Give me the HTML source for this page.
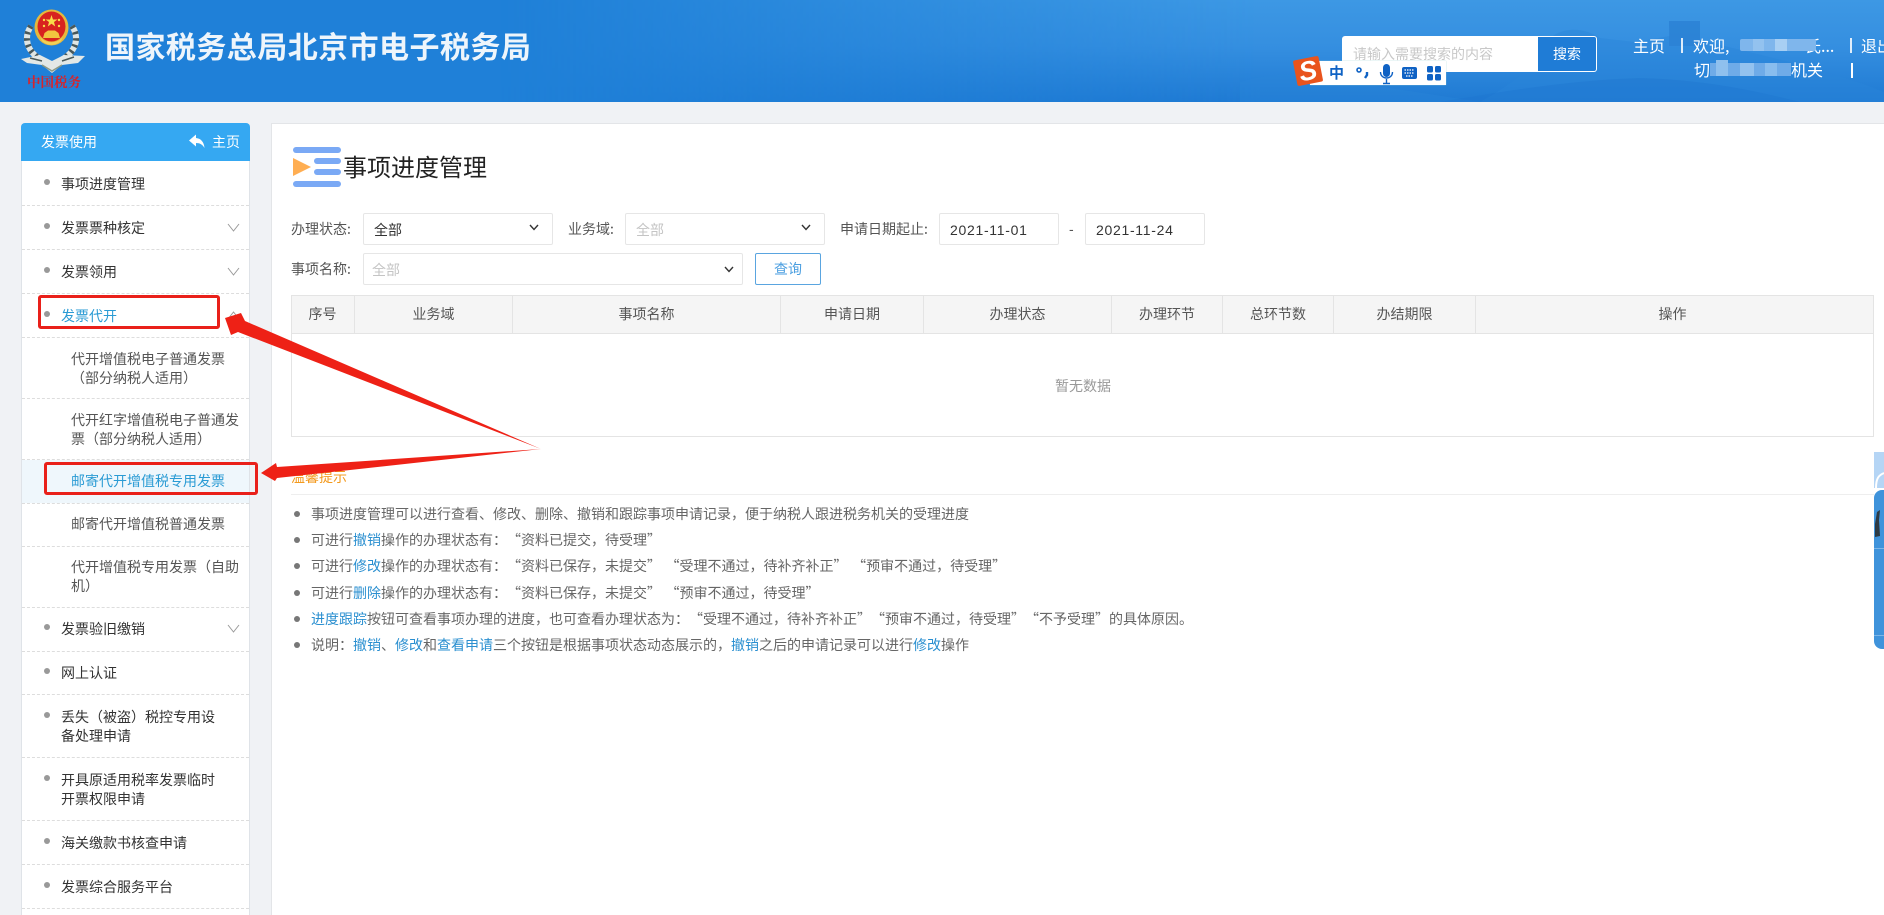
<!DOCTYPE html>
<html lang="zh-CN">
<head>
<meta charset="utf-8">
<title>事项进度管理</title>
<style>
html,body{margin:0;padding:0;width:1884px;height:915px;overflow:hidden;background:#f0f2f5}
body{position:relative;font-family:"Noto Sans CJK SC","Liberation Sans",sans-serif;font-size:14px;color:#333;text-spacing-trim:space-all}
.a,.t,.l,.s,.h,.p{position:absolute}
.t{white-space:nowrap;line-height:20px;height:20px}
.l{left:61px;white-space:nowrap;line-height:19px;color:#333}
.s{left:71px;white-space:nowrap;line-height:19px;color:#555}
.d{position:absolute;left:22px;width:227px;height:0;border-top:1px dashed #ddd}
.b{position:absolute;left:44px;width:6px;height:6px;border-radius:50%;background:#999}
.box{position:absolute;background:#fff;border:1px solid #e6e6e6;box-sizing:border-box;border-radius:2px}
.h{top:295px;height:39px;line-height:39px;text-align:center;color:#555;box-sizing:border-box;border-right:1px solid #e4e4e4}
.p{left:311px;white-space:pre;line-height:20px;color:#666;word-spacing:1.4px}
.p a{color:#2a8fd0;text-decoration:none}
.p:before{content:"";position:absolute;left:-17px;top:7px;width:6px;height:6px;border-radius:50%;background:#777}
.w{color:#fff;font-size:16px}
.m{position:absolute;background:#8fc0ee}
.dt{font-family:'Liberation Sans',sans-serif;color:#333;letter-spacing:.7px}
</style>
</head>
<body>

<!-- header -->
<div class="a" style="left:0;top:0;width:1884px;height:102px;background:#1f80d8;overflow:hidden">
  <div class="a" style="left:500px;top:0;width:1384px;height:102px;background:linear-gradient(180deg,#3d98e4 0,#358fe0 45%,#1f7ad3 100%);-webkit-mask-image:linear-gradient(90deg,transparent 0,#000 55%);mask-image:linear-gradient(90deg,transparent 0,#000 55%)"></div>
  <svg class="a" style="left:1240px;top:0" width="644" height="102" viewBox="0 0 644 102">
    <path d="M0 82 C40 70 90 72 130 85 L240 102 L0 102Z" fill="#2a86da" opacity=".35"/>
    <path d="M310 38 C325 26 345 28 360 38 L395 42 L430 36 L429 21 L460 21 L460 40 C520 55 590 70 644 92 L644 102 L240 102 C280 80 300 60 310 38Z" fill="#2b85da" opacity=".45"/>
    <path d="M429 21 L460 21 L460 46 L429 46Z" fill="#2a7fd2" opacity=".6"/>
    <path d="M200 102 C260 92 330 80 400 78 C470 80 520 92 560 102Z" fill="#1d75cf" opacity=".4"/>
  </svg>
</div>

<!-- emblem -->
<svg class="a" style="left:0;top:0" width="100" height="76" viewBox="0 0 100 76">
  <path d="M31 26 C23 38 27 52 42 60" fill="none" stroke="#dfe5e3" stroke-width="6"/>
  <path d="M72 26 C80 38 76 52 61 60" fill="none" stroke="#dfe5e3" stroke-width="6"/>
  <path d="M31 26 C23 38 27 52 42 60" fill="none" stroke="#48585a" stroke-width="6" stroke-dasharray="2.5 4"/>
  <path d="M72 26 C80 38 76 52 61 60" fill="none" stroke="#48585a" stroke-width="6" stroke-dasharray="2.5 4"/>
  <path d="M21 59 L40 55 L52 61 L64 55 L85 56 L78 63 L62 65 L52 73 L42 65 L27 63Z" fill="#e3e8e6"/>
  <path d="M42 65 L52 71 L62 65" fill="none" stroke="#8c9a86" stroke-width="1.5"/>
  <path d="M30 58 L42 61 M74 57 L62 61" stroke="#4a5a5a" stroke-width="1.5"/>
  <ellipse cx="51.5" cy="27.5" rx="17" ry="18" fill="#e6b83c"/>
  <ellipse cx="51.5" cy="26.5" rx="14" ry="15" fill="#d8231f"/>
  <polygon points="51.5,15 53,19.5 57.5,19.5 54,22 55.2,26.5 51.5,23.8 47.8,26.5 49,22 45.5,19.5 50,19.5" fill="#f8dc4a"/>
  <circle cx="44" cy="20" r="1.2" fill="#f8dc4a"/><circle cx="59" cy="20" r="1.2" fill="#f8dc4a"/><circle cx="44" cy="26" r="1.2" fill="#f8dc4a"/><circle cx="59" cy="26" r="1.2" fill="#f8dc4a"/>
  <path d="M43 38 L44.5 33 L48 30.5 L55 30.5 L58.5 33 L60 38Z" fill="#f2c63f"/>
  <path d="M40 37 C46 44 57 44 63 37 L61 41 C56 46 47 46 42 41Z" fill="#f3d058"/>
</svg>
<div class="t" style="left:27px;top:71px;width:56px;font-family:'Noto Serif CJK SC','Liberation Serif',serif;font-size:13.5px;color:#d8232a;font-weight:700;height:20px">中国税务</div>

<div class="t" style="left:105px;top:25px;height:40px;line-height:40px;font-size:30px;font-weight:700;color:#eef5fb;letter-spacing:.45px">国家税务总局北京市电子税务局</div>

<!-- search -->
<div class="a" style="left:1342px;top:36px;width:196px;height:36px;background:#fff;border-radius:3px 0 0 3px"></div>
<div class="t" style="left:1353px;top:44px;color:#c8c8c8">请输入需要搜索的内容</div>
<div class="a" style="left:1538px;top:36px;width:59px;height:36px;box-sizing:border-box;background:#1f7cd6;border:1px solid #fff;border-left:0;border-radius:0 3px 3px 0;color:#fff;text-align:center;line-height:34px">搜索</div>

<!-- sogou bar -->
<div class="a" style="left:1310px;top:61px;width:136px;height:24px;background:#fff;box-shadow:0 0 1px #9cc"></div>
<div class="a" style="left:1295px;top:58px;width:26px;height:26px;background:#e9541d;border-radius:2px;transform:rotate(-11deg);color:#fff;font:italic 700 27px/26px 'Liberation Sans',sans-serif;text-align:center">S</div>
<div class="t" style="left:1329px;top:63px;font-size:15px;font-weight:700;color:#0f62c4">中</div>
<svg class="a" style="left:1354px;top:62px" width="92" height="24" viewBox="0 0 92 24">
  <circle cx="5" cy="8" r="2" fill="none" stroke="#0f62c4" stroke-width="1.6"/>
  <path d="M13 10 L13 13 L11 16" fill="none" stroke="#0f62c4" stroke-width="2.4"/>
  <rect x="29" y="2" width="7" height="13" rx="3.5" fill="#0f62c4"/>
  <path d="M26.5 10 C26.5 18 38.5 18 38.5 10 M32.5 17 L32.5 21 M29 21.5 L36 21.5" fill="none" stroke="#0f62c4" stroke-width="1.4"/>
  <rect x="48" y="5" width="15" height="12" rx="2" fill="#0f62c4"/>
  <path d="M50.5 8 H60.5 M50.5 11 H60.5 M52 14 H59" stroke="#fff" stroke-width="1.3" stroke-dasharray="1.5 1"/>
  <rect x="73" y="4" width="6" height="6.5" rx="1.6" fill="#0f62c4"/><rect x="81" y="4" width="6" height="6.5" rx="1.6" fill="#0f62c4"/><rect x="73" y="12" width="6" height="6.5" rx="1.6" fill="#0f62c4"/><rect x="81" y="12" width="6" height="6.5" rx="1.6" fill="#0f62c4"/>
</svg>

<!-- user -->
<div class="t w" style="left:1633px;top:35px">主页</div>
<div class="a" style="left:1681px;top:38px;width:2px;height:15px;background:#fff;opacity:.85"></div>
<div class="t w" style="left:1693px;top:35px">欢迎,</div>
<div class="t w" style="left:1805px;top:35px;width:30px;overflow:hidden">氏...</div>
<div class="m" style="left:1740px;top:39px;width:76px;height:12px;background:#7fb6ec;border-radius:2px"></div>
<div class="m" style="left:1775px;top:39px;width:12px;height:12px;background:#a8cff3"></div>
<div class="m" style="left:1753px;top:39px;width:11px;height:12px;background:#93c2ef"></div>
<div class="a" style="left:1850px;top:38px;width:2px;height:15px;background:#fff;opacity:.85"></div>
<div class="t w" style="left:1861px;top:35px">退出</div>
<div class="t w" style="left:1694px;top:59px">切</div>
<div class="m" style="left:1710px;top:63px;width:81px;height:13px;background:#6fabe8"></div>
<div class="m" style="left:1716px;top:60px;width:12px;height:16px;background:#8fc0ee"></div>
<div class="m" style="left:1740px;top:63px;width:14px;height:13px;background:#93c2ef"></div>
<div class="m" style="left:1765px;top:63px;width:12px;height:13px;background:#89bdee"></div>
<div class="t w" style="left:1791px;top:59px">机关</div>
<div class="a" style="left:1851px;top:63px;width:2px;height:15px;background:#fff"></div>

<!-- sidebar -->
<div class="a" style="left:21px;top:161px;width:229px;height:754px;background:#fff;border:1px solid #dfe3e8;border-width:0 1px;box-sizing:border-box"></div>
<div class="a" style="left:21px;top:123px;width:229px;height:38px;background:#35a8f2;border-radius:4px 4px 0 0"></div>
<div class="t" style="left:41px;top:132px;color:#fff">发票使用</div>
<svg class="a" style="left:189px;top:134px" width="16" height="15" viewBox="0 0 16 15"><path d="M0 6.5 L7 .5 L7 4 C12 4.5 15 8 15.5 14 C13.5 10.5 11 9 7 9 L7 12.5Z" fill="#fff"/></svg>
<div class="t" style="left:212px;top:132px;color:#fff">主页</div>

<div class="a" style="left:22px;top:460px;width:227px;height:43px;background:#eff7fc"></div>
<div class="d" style="top:205px"></div><div class="d" style="top:249px"></div><div class="d" style="top:293px"></div><div class="d" style="top:337px"></div><div class="d" style="top:398px"></div><div class="d" style="top:459px"></div><div class="d" style="top:503px"></div><div class="d" style="top:546px"></div><div class="d" style="top:607px"></div><div class="d" style="top:651px"></div><div class="d" style="top:694px"></div><div class="d" style="top:757px"></div><div class="d" style="top:820px"></div><div class="d" style="top:864px"></div><div class="d" style="top:908px"></div>

<div class="b" style="top:179px"></div><div class="l" style="top:175px">事项进度管理</div>
<div class="b" style="top:223px"></div><div class="l" style="top:219px">发票票种核定</div>
<div class="b" style="top:267px"></div><div class="l" style="top:263px">发票领用</div>
<div class="b" style="top:311px"></div><div class="l" style="top:307px;color:#2a9bd4">发票代开</div>
<div class="s" style="top:350px">代开增值税电子普通发票<br>（部分纳税人适用）</div>
<div class="s" style="top:411px">代开红字增值税电子普通发<br>票（部分纳税人适用）</div>
<div class="s" style="top:472px;color:#2a9bd4">邮寄代开增值税专用发票</div>
<div class="s" style="top:515px">邮寄代开增值税普通发票</div>
<div class="s" style="top:558px">代开增值税专用发票（自助<br>机）</div>
<div class="b" style="top:624px"></div><div class="l" style="top:620px">发票验旧缴销</div>
<div class="b" style="top:668px"></div><div class="l" style="top:664px">网上认证</div>
<div class="b" style="top:712px"></div><div class="l" style="top:708px">丢失（被盗）税控专用设<br>备处理申请</div>
<div class="b" style="top:775px"></div><div class="l" style="top:771px">开具原适用税率发票临时<br>开票权限申请</div>
<div class="b" style="top:838px"></div><div class="l" style="top:834px">海关缴款书核查申请</div>
<div class="b" style="top:882px"></div><div class="l" style="top:878px">发票综合服务平台</div>

<svg class="a" style="left:0;top:0" width="260" height="700" viewBox="0 0 260 700">
  <g fill="none" stroke="#9a9a9a" stroke-width="1">
    <path d="M228 224 L233.5 231 L239 224"/>
    <path d="M228 268 L233.5 275 L239 268"/>
    <path d="M228 319 L233.5 312 L239 319"/>
    <path d="M228 625 L233.5 632 L239 625"/>
  </g>
</svg>

<!-- main panel -->
<div class="a" style="left:271px;top:123px;width:1613px;height:792px;background:#fff;border:1px solid #e3e5e8;border-width:1px 0 0 1px;box-sizing:border-box"></div>

<svg class="a" style="left:293px;top:147px" width="48" height="40" viewBox="0 0 48 40">
  <rect x="0" y="0" width="48" height="6" rx="3" fill="#7aa9f5"/>
  <rect x="21" y="11" width="27" height="6" rx="3" fill="#7aa9f5"/>
  <rect x="21" y="22" width="27" height="6" rx="3" fill="#7aa9f5"/>
  <rect x="0" y="34" width="48" height="6" rx="3" fill="#7aa9f5"/>
  <polygon points="0,11 18,20 0,29" fill="#ffae52"/>
</svg>
<div class="t" style="left:343px;top:151px;height:30px;line-height:30px;font-size:24px;color:#222">事项进度管理</div>

<!-- filters -->
<div class="t" style="left:291px;top:219px;color:#555">办理状态:</div>
<div class="box" style="left:363px;top:213px;width:190px;height:32px"></div>
<div class="t" style="left:374px;top:220px;color:#333">全部</div>
<div class="t" style="left:568px;top:219px;color:#555">业务域:</div>
<div class="box" style="left:625px;top:213px;width:200px;height:32px"></div>
<div class="t" style="left:636px;top:220px;color:#c4c4c4">全部</div>
<div class="t" style="left:840px;top:219px;color:#555">申请日期起止:</div>
<div class="box" style="left:939px;top:213px;width:120px;height:32px"></div>
<div class="t dt" style="left:950px;top:220px">2021-11-01</div>
<div class="t" style="left:1069px;top:219px;font-family:'Liberation Sans',sans-serif;color:#555">-</div>
<div class="box" style="left:1085px;top:213px;width:120px;height:32px"></div>
<div class="t dt" style="left:1096px;top:220px">2021-11-24</div>

<div class="t" style="left:291px;top:259px;color:#555">事项名称:</div>
<div class="box" style="left:363px;top:253px;width:380px;height:32px"></div>
<div class="t" style="left:372px;top:260px;color:#c4c4c4">全部</div>
<div class="a" style="left:755px;top:253px;width:66px;height:32px;box-sizing:border-box;border:1px solid #5aa5e0;border-radius:2px;color:#4a9ee0;text-align:center;line-height:31px;background:#fff">查询</div>

<svg class="a" style="left:0;top:0" width="830" height="290" viewBox="0 0 830 290">
  <g fill="none" stroke="#333" stroke-width="1.4">
    <path d="M530 225 L534 229.5 L538 225"/>
    <path d="M802 225 L806 229.5 L810 225"/>
    <path d="M725 267 L729 271.5 L733 267"/>
  </g>
</svg>

<!-- table -->
<div class="a" style="left:291px;top:295px;width:1583px;height:142px;box-sizing:border-box;border:1px solid #e4e4e4"></div>
<div class="a" style="left:291px;top:295px;width:1583px;height:39px;background:#f5f5f5;box-sizing:border-box;border:1px solid #e4e4e4"></div>
<div class="h" style="left:291px;width:64px">序号</div>
<div class="h" style="left:355px;width:158px">业务域</div>
<div class="h" style="left:513px;width:268px">事项名称</div>
<div class="h" style="left:781px;width:143px">申请日期</div>
<div class="h" style="left:924px;width:188px">办理状态</div>
<div class="h" style="left:1112px;width:111px">办理环节</div>
<div class="h" style="left:1223px;width:111px">总环节数</div>
<div class="h" style="left:1334px;width:142px">办结期限</div>
<div class="h" style="left:1476px;width:393px;border-right:0">操作</div>
<div class="t" style="left:1055px;top:376px;color:#999">暂无数据</div>

<!-- tips -->
<div class="t" style="left:291px;top:467px;color:#f39a1f">温馨提示</div>
<div class="a" style="left:291px;top:494px;width:1583px;height:1px;background:#eee"></div>
<div class="p" style="top:504px">事项进度管理可以进行查看、修改、删除、撤销和跟踪事项申请记录，便于纳税人跟进税务机关的受理进度</div>
<div class="p" style="top:530px">可进行<a>撤销</a>操作的办理状态有：“资料已提交，待受理”</div>
<div class="p" style="top:556px">可进行<a>修改</a>操作的办理状态有：“资料已保存，未提交” “受理不通过，待补齐补正” “预审不通过，待受理”</div>
<div class="p" style="top:583px">可进行<a>删除</a>操作的办理状态有：“资料已保存，未提交” “预审不通过，待受理”</div>
<div class="p" style="top:609px"><a>进度跟踪</a>按钮可查看事项办理的进度，也可查看办理状态为：“受理不通过，待补齐补正”“预审不通过，待受理”“不予受理”的具体原因。</div>
<div class="p" style="top:635px">说明：<a>撤销</a>、<a>修改</a>和<a>查看申请</a>三个按钮是根据事项状态动态展示的，<a>撤销</a>之后的申请记录可以进行<a>修改</a>操作</div>

<!-- right floating widget -->
<div class="a" style="left:1874px;top:452px;width:10px;height:36px;background:#b5d5f5;overflow:hidden">
  <svg width="10" height="36" viewBox="0 0 10 36" style="display:block"><path d="M2 36 C2 26 5 23 10 21" fill="none" stroke="#fff" stroke-width="2"/></svg>
</div>
<div class="a" style="left:1874px;top:490px;width:10px;height:159px;background:#3f93db;border-radius:8px 0 0 8px;overflow:hidden">
  <div class="a" style="left:0;top:58px;width:10px;height:1px;background:#7db6e8"></div>
  <div class="a" style="left:0;top:145px;width:10px;height:1px;background:#7db6e8"></div>
  <svg class="a" style="left:0;top:20px" width="10" height="28" viewBox="0 0 10 28"><path d="M3 2 L6 0 L5 10 L6 26 L1 27 L1 14Z" fill="#2d3a44"/></svg>
</div>

<!-- annotations -->
<svg class="a" style="left:0;top:0" width="1884" height="915" viewBox="0 0 1884 915">
  <rect x="39.5" y="296.5" width="179" height="31" rx="1.5" fill="none" stroke="#e9201a" stroke-width="3"/>
  <rect x="45.5" y="463.5" width="211" height="30" rx="1.5" fill="none" stroke="#e9201a" stroke-width="3"/>
  <polygon points="225,318 241,313 245,321 541,449 238,332 231,335" fill="#ee2116"/>
  <polygon points="261,473 276,463 277,467 541,449 277,478 275,481" fill="#ee2116"/>
</svg>

</body>
</html>
